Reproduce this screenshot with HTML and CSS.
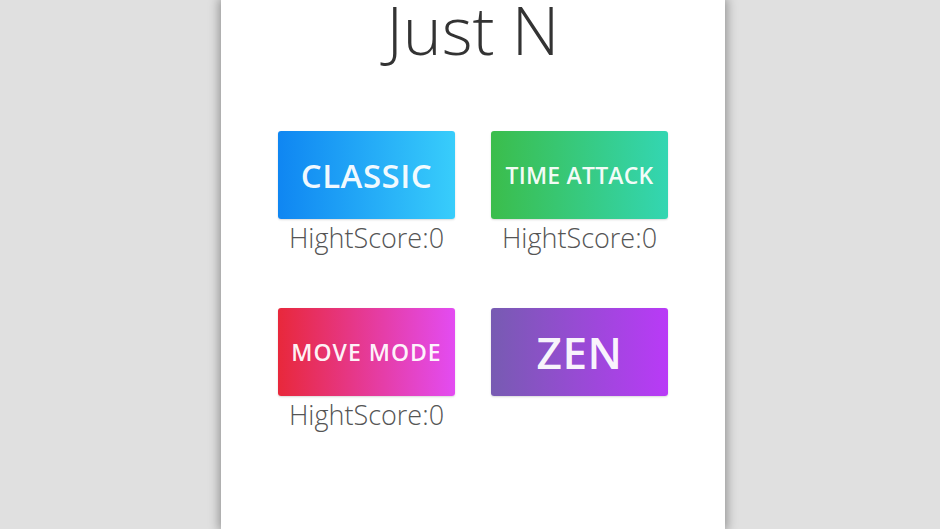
FILE: index.html
```html
<!DOCTYPE html>
<html>
<head>
<meta charset="utf-8">
<link rel="stylesheet" href="styles.css">
</head>
<body>
<main class="panel">
  <h1 class="title">Just N</h1>
  <div class="modes">
    <div class="mode">
      <div class="btn btn-classic">CLASSIC</div>
      <div class="score">HightScore:0</div>
    </div>
    <div class="mode">
      <div class="btn btn-time">TIME ATTACK</div>
      <div class="score">HightScore:0</div>
    </div>
    <div class="mode">
      <div class="btn btn-move">MOVE MODE</div>
      <div class="score">HightScore:0</div>
    </div>
    <div class="mode">
      <div class="btn btn-zen">ZEN</div>
    </div>
  </div>
</main>
</body>
</html>
```
FILE: styles.css
```css
html, body {
  margin: 0;
  padding: 0;
  height: 100%;
}
body {
  background: #e0e0e0;
  display: flex;
  justify-content: center;
  overflow: hidden;
  font-family: "Open Sans", "Liberation Sans", sans-serif;
}
.panel {
  width: 504px;
  margin-left: 6px;
  height: 529px;
  background: #ffffff;
  box-shadow: 0 0 10px 2px rgba(0,0,0,0.35);
  display: flex;
  flex-direction: column;
  align-items: center;
}
.title {
  margin: -11px 0 0 0;
  font-weight: 300;
  font-size: 66px;
  line-height: 80px;
  color: #333;
}
.modes {
  margin-top: 62px;
  display: grid;
  grid-template-columns: 177px 177px;
  column-gap: 36px;
  row-gap: 55px;
}
.mode {
  display: flex;
  flex-direction: column;
  align-items: center;
}
.btn {
  width: 177px;
  height: 88px;
  border-radius: 3px;
  display: flex;
  align-items: center;
  justify-content: center;
  color: rgba(255,255,255,0.95);
  font-weight: 600;
  box-shadow: 0 1px 2px rgba(0,0,0,0.15);
  white-space: nowrap;
}
.btn-classic {
  background: linear-gradient(to right, #0f86f2, #38cdfb);
  font-size: 33px;
  letter-spacing: 0.5px;
}
.btn-time {
  background: linear-gradient(to right, #3bbd4b, #33d6b2);
  font-size: 23px;
  letter-spacing: 0.2px;
}
.btn-move {
  background: linear-gradient(to right, #e8283b, #e34cf2);
  font-size: 23px;
  letter-spacing: 1px;
}
.btn-zen {
  background: linear-gradient(to right, #775bb2, #b93af7);
  font-size: 44px;
  letter-spacing: 0.5px;
}
.score {
  margin-top: 4px;
  font-weight: 300;
  font-size: 27px;
  line-height: 30px;
  color: #555;
}
```
